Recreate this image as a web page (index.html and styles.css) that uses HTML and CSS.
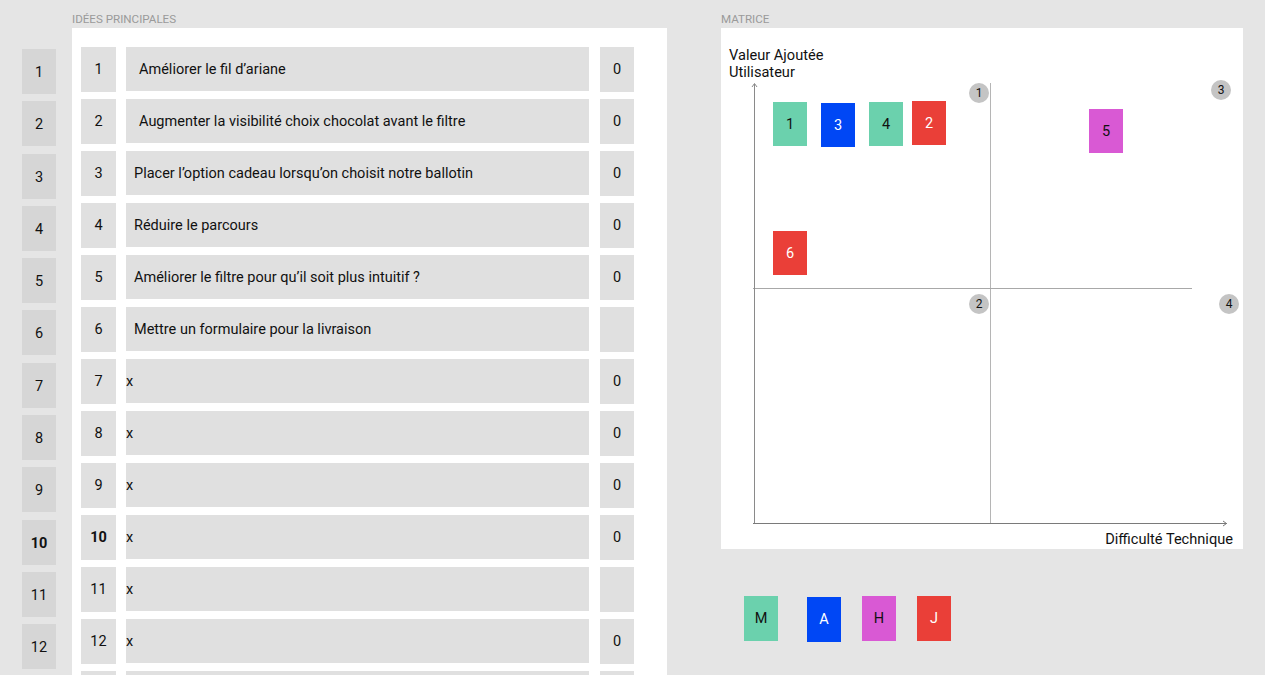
FILE: index.html
```html
<!DOCTYPE html>
<html lang="fr">
<head>
<meta charset="utf-8">
<title>Idées principales — Matrice</title>
<link rel="stylesheet" href="styles.css">
</head>
<body>
<div class="page">
  <div class="gutter">
    <div class="gnum">1</div><div class="gnum">2</div><div class="gnum">3</div><div class="gnum">4</div>
    <div class="gnum">5</div><div class="gnum">6</div><div class="gnum">7</div><div class="gnum">8</div>
    <div class="gnum">9</div><div class="gnum bold">10</div><div class="gnum">11</div><div class="gnum">12</div>
  </div>

  <section class="ideas">
    <div class="section-title">IDÉES PRINCIPALES</div>
    <div class="panel">
      <div class="row"><div class="num">1</div><div class="text pad-l">Améliorer le fil d’ariane</div><div class="score">0</div></div>
      <div class="row"><div class="num">2</div><div class="text pad-l">Augmenter la visibilité choix chocolat avant le filtre</div><div class="score">0</div></div>
      <div class="row"><div class="num">3</div><div class="text">Placer l’option cadeau lorsqu’on choisit notre ballotin</div><div class="score">0</div></div>
      <div class="row"><div class="num">4</div><div class="text">Réduire le parcours</div><div class="score">0</div></div>
      <div class="row"><div class="num">5</div><div class="text">Améliorer le filtre pour qu’il soit plus intuitif ?</div><div class="score">0</div></div>
      <div class="row"><div class="num">6</div><div class="text">Mettre un formulaire pour la livraison</div><div class="score"></div></div>
      <div class="row"><div class="num">7</div><div class="text x">x</div><div class="score">0</div></div>
      <div class="row"><div class="num">8</div><div class="text x">x</div><div class="score">0</div></div>
      <div class="row"><div class="num">9</div><div class="text x">x</div><div class="score">0</div></div>
      <div class="row"><div class="num bold">10</div><div class="text x">x</div><div class="score">0</div></div>
      <div class="row"><div class="num">11</div><div class="text x">x</div><div class="score"></div></div>
      <div class="row"><div class="num">12</div><div class="text x">x</div><div class="score">0</div></div>
      <div class="row"><div class="num"></div><div class="text x"></div><div class="score"></div></div>
    </div>
  </section>

  <section class="matrix-col">
    <div class="section-title">MATRICE</div>
    <div class="matrix">
      <div class="ylabel">Valeur Ajoutée<br>Utilisateur</div>
      <svg class="axes" width="522" height="521" viewBox="0 0 522 521">
        <line x1="269.5" y1="55" x2="269.5" y2="495" stroke="#b5b5b5" stroke-width="1"/>
        <line x1="32" y1="260.5" x2="471" y2="260.5" stroke="#a8a8a8" stroke-width="1"/>
        <line x1="33.5" y1="56" x2="33.5" y2="495" stroke="#8a8a8a" stroke-width="1"/>
        <polyline points="31,59 33.5,55.5 36,59" fill="none" stroke="#8a8a8a" stroke-width="1"/>
        <line x1="32" y1="495.5" x2="506" y2="495.5" stroke="#7a7a7a" stroke-width="1"/>
        <polyline points="502,493 505.5,495.5 502,498" fill="none" stroke="#7a7a7a" stroke-width="1"/>
      </svg>
      <div class="badge" style="left:248px;top:55px">1</div>
      <div class="badge" style="left:490px;top:52px">3</div>
      <div class="badge" style="left:248px;top:266px">2</div>
      <div class="badge" style="left:498px;top:266px">4</div>

      <div class="card green" style="left:52px;top:74px">1</div>
      <div class="card blue" style="left:100px;top:75px">3</div>
      <div class="card green" style="left:148px;top:74px">4</div>
      <div class="card red" style="left:191px;top:73px">2</div>
      <div class="card pink" style="left:368px;top:81px">5</div>
      <div class="card red" style="left:52px;top:203px">6</div>

      <div class="xlabel">Difficulté Technique</div>
    </div>
    <div class="legend">
      <div class="lcard green">M</div>
      <div class="lcard blue l-a">A</div>
      <div class="lcard pink l-h">H</div>
      <div class="lcard red l-j">J</div>
    </div>
  </section>
</div>
</body>
</html>
```

FILE: styles.css
```css
html, body {
  margin: 0;
  padding: 0;
  height: 675px;
  overflow: hidden;
  background: #e5e5e5;
  font-family: Roboto, "Liberation Sans", Arial, sans-serif;
  color: #111;
}

.page {
  display: flex;
  align-items: flex-start;
}

.gutter {
  width: 50px;
  padding: 49px 0 0 22px;
  display: flex;
  flex-direction: column;
  gap: 7.3px;
}

.gnum {
  width: 34px;
  height: 45px;
  background: #d6d6d6;
  display: flex;
  align-items: center;
  justify-content: center;
  font-size: 14.5px;
  padding-top: 2px;
  box-sizing: border-box;
}

.bold { font-weight: 700; }

.section-title {
  height: 28px;
  box-sizing: border-box;
  padding-top: 13px;
  font-size: 11.6px;
  line-height: 13px;
  color: #9a9a9a;
}

.ideas {
  width: 595px;
}

.panel {
  background: #fff;
  padding: 19px 33px 0 9px;
  height: 700px;
  display: flex;
  flex-direction: column;
  gap: 8px;
}

.row {
  display: flex;
  height: 44px;
  flex: none;
}

.num {
  width: 35px;
  height: 45px;
  background: #e0e0e0;
  display: flex;
  align-items: center;
  justify-content: center;
  font-size: 14.5px;
  margin-right: 10px;
}

.text {
  width: 463px;
  height: 44px;
  background: #e0e0e0;
  display: flex;
  align-items: center;
  font-size: 14.5px;
  padding-left: 8px;
  box-sizing: border-box;
  margin-right: 11px;
  white-space: nowrap;
}

.text.pad-l { padding-left: 13px; }
.text.x { padding-left: 0; }

.score {
  width: 34px;
  height: 45px;
  background: #e0e0e0;
  display: flex;
  align-items: center;
  justify-content: center;
  font-size: 14.5px;
}

.matrix-col {
  margin-left: 54px;
  width: 522px;
}

.matrix {
  position: relative;
  width: 522px;
  height: 521px;
  background: #fff;
}

.axes {
  position: absolute;
  left: 0;
  top: 0;
}

.ylabel {
  position: absolute;
  left: 8px;
  top: 19px;
  font-size: 14.6px;
  line-height: 17px;
  color: #111;
}

.xlabel {
  position: absolute;
  right: 10px;
  top: 503px;
  font-size: 14.6px;
  line-height: 17px;
  color: #111;
}

.badge {
  position: absolute;
  width: 20px;
  height: 20px;
  border-radius: 50%;
  background: #c4c4c4;
  font-size: 12px;
  display: flex;
  align-items: center;
  justify-content: center;
  color: #111;
}

.card, .lcard {
  width: 34px;
  height: 44px;
  display: flex;
  align-items: center;
  justify-content: center;
  font-size: 14.5px;
}

.card { position: absolute; }

.green { background: #6bd1ad; color: #111; }
.blue { background: #0047f5; color: #fff; }
.pink { background: #d959d4; color: #111; }
.red { background: #ea3f38; color: #fff; }

.legend {
  display: flex;
  align-items: flex-start;
  margin-top: 47px;
  padding-left: 23px;
}

.lcard { height: 45px; }
.l-a { margin-left: 29px; margin-top: 1px; }
.l-h { margin-left: 21px; }
.l-j { margin-left: 21px; }
```
